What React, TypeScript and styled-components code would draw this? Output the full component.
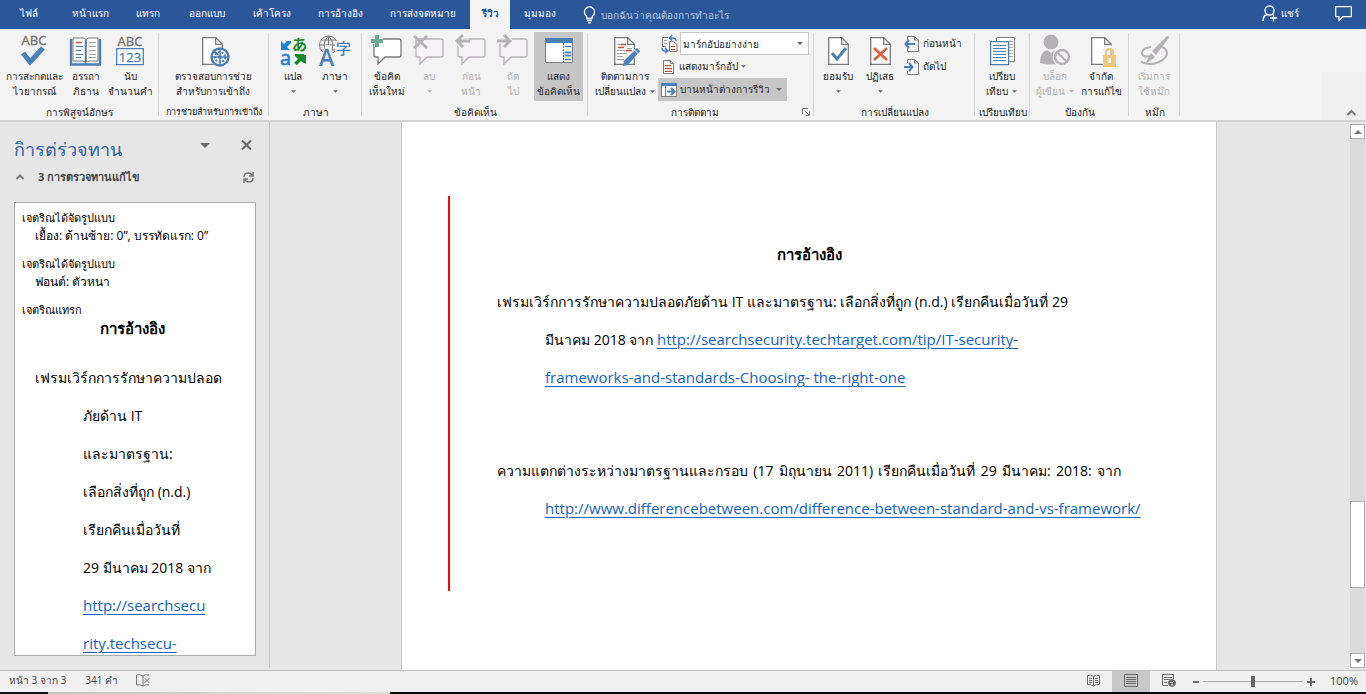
import React from "react";
import styled, { createGlobalStyle, css } from "styled-components";

const BLUE = "#4a7fb8";
const GREY = "#7a7a7a";
const PALE = "#b5b2b5";

const Global = createGlobalStyle`
  * { box-sizing: border-box; }
  body { margin: 0; background: #e6e6e6; color: #262626; font-family: "Open Sans", "Noto Sans", sans-serif; font-size: 10px; }
  button, select, input { font: inherit; color: inherit; margin: 0; padding: 0; border: 0; background: none; }
  svg { display: block; flex: none; overflow: visible; }
`;

const Shell = styled.div`
  display: flex;
  flex-direction: column;
  height: 100vh;
  overflow: hidden;
`;

/* ---------- tab bar ---------- */
const TabBar = styled.header`
  display: flex;
  flex: none;
  height: 29px;
  background: #2b579a;
  color: #fff;
`;
const Tab = styled.button<{ $w: number; $active?: boolean }>`
  flex: 0 0 ${p => p.$w}px;
  height: 29px;
  padding-bottom: 2px;
  white-space: nowrap;
  ${p => p.$active && css`background: #f3f3f3; color: #2b579a; font-weight: 600;`}
`;
const TellMe = styled.label`
  display: flex;
  flex: 1;
  align-items: center;
  gap: 5px;
  padding-left: 14px;
`;
const TellInput = styled.input`
  width: 160px;
  height: 20px;
  outline: 0;
  &::placeholder { color: #b9cae6; opacity: 1; }
`;
const Share = styled.button`
  display: flex;
  align-items: center;
  gap: 3px;
  margin-right: 36px;
  padding-bottom: 3px;
`;
const CommentBtn = styled.button`
  display: flex;
  align-items: center;
  margin-right: 14px;
  padding-bottom: 3px;
`;

/* ---------- ribbon ---------- */
const Ribbon = styled.div`
  display: flex;
  flex: none;
  height: 93px;
  background: #f3f3f3;
  border-bottom: 2px solid #d2d2d2;
`;
const GroupBox = styled.section<{ $w: number }>`
  display: flex;
  flex: 0 0 ${p => p.$w}px;
  flex-direction: column;
  min-width: 0;
  padding-top: 3px;
  background: linear-gradient(#d4d4d4, #d4d4d4) right 4px / 1px 83px no-repeat;
`;
const GroupBody = styled.div<{ $pad?: number }>`
  display: flex;
  height: 72px;
  padding-left: ${p => p.$pad || 0}px;
`;
const GroupFoot = styled.div`
  display: flex;
  align-items: center;
  height: 16px;
`;
const GroupName = styled.h2<{ $small?: boolean }>`
  flex: 1;
  min-width: 0;
  margin: 0;
  font-size: ${p => (p.$small ? 9 : 10)}px;
  font-weight: 400;
  line-height: 16px;
  text-align: center;
  white-space: nowrap;
`;
const Launcher = styled.button`
  margin-right: 4px;
  width: 8px;
`;
const BigButton = styled.button<{ $w: number; $on?: boolean }>`
  display: flex;
  flex: 0 0 ${p => p.$w}px;
  flex-direction: column;
  align-items: center;
  min-width: 0;
  height: 69px;
  padding-top: 1px;
  line-height: 15px;
  white-space: nowrap;
  background: ${p => (p.$on ? "#c6c6c6" : "none")};
  &:disabled { color: #b1b1b1; }
`;
const Line = styled.span`
  display: flex;
  align-items: center;
  justify-content: center;
  gap: 4px;
  height: 15px;
`;
const Stack = styled.div`
  display: flex;
  flex-direction: column;
`;
const ComboRow = styled.label`
  display: flex;
  align-items: center;
  gap: 2px;
  height: 23px;
  padding-left: 3px;
`;
const ComboWrap = styled.span`
  position: relative;
  display: block;
  width: 129px;
  height: 23px;
  border: 1px solid #c6c6c6;
  background: #fff;
`;
const Combo = styled.select`
  width: 100%;
  height: 21px;
  padding-left: 2px;
  appearance: none;
  outline: 0;
`;
const ComboCaret = styled.span`
  position: absolute;
  right: 5px;
  top: 9px;
  pointer-events: none;
`;
const SmallButton = styled.button<{ $on?: boolean; $w?: number }>`
  display: flex;
  align-items: center;
  gap: 3px;
  width: ${p => (p.$w ? p.$w + "px" : "auto")};
  height: 23px;
  padding-left: 3px;
  white-space: nowrap;
  background: ${p => (p.$on ? "#c6c6c6" : "none")};
`;
const Spread = styled.span`
  display: flex;
  flex: 1;
  align-items: center;
  justify-content: space-between;
  padding-right: 5px;
`;
const RibbonEnd = styled.div`
  display: flex;
  flex: 1;
  align-items: flex-end;
  justify-content: flex-end;
`;
const Collapse = styled.button`
  display: flex;
  align-items: flex-end;
  justify-content: flex-end;
  width: 44px;
  height: 48px;
  padding: 0 10px 4px 0;
  background: #f0f0f0;
`;

/* ---------- work area ---------- */
const Work = styled.div`
  display: flex;
  flex: 1;
  min-height: 0;
`;
const Pane = styled.aside`
  display: flex;
  flex: 0 0 270px;
  flex-direction: column;
  margin-bottom: 2px;
  padding: 14px 13px 12px 14px;
  border-right: 1px solid #c3c3c3;
`;
const PaneHead = styled.div`
  display: flex;
  align-items: center;
  height: 26px;
`;
const PaneTitle = styled.h1`
  flex: 1;
  margin: 0;
  color: #2f5fa8;
  font-size: 18px;
  font-weight: 400;
  line-height: 26px;
  white-space: nowrap;
`;
const IconButton = styled.button<{ $gap?: number }>`
  display: flex;
  margin: 0 ${p => p.$gap || 0}px 8px 0;
`;
const Summary = styled.div`
  display: flex;
  align-items: center;
  gap: 14px;
  height: 30px;
  padding: 0 2px;
`;
const Count = styled.strong`
  flex: 1;
  color: #444;
  font-size: 11px;
  white-space: nowrap;
`;
const Card = styled.div`
  flex: 1;
  min-height: 0;
  margin-top: 10px;
  padding: 6px 7px 0;
  overflow: hidden;
  border: 1px solid #ababab;
  background: #fff;
  color: #000;
  white-space: nowrap;
`;
const Kind = styled.div`
  font-size: 11px;
  line-height: 18px;
`;
const Detail = styled.div`
  margin-bottom: 10px;
  padding-left: 13px;
  font-size: 12px;
  line-height: 18px;
`;
const CardHeading = styled.h3`
  margin: 0 0 12px;
  padding-right: 6px;
  font-size: 15px;
  line-height: 18px;
  text-align: center;
`;
const Hanging = styled.p<{ $indent: number; $gap?: number }>`
  margin: ${p => p.$gap || 0}px 0 0;
  padding-left: ${p => p.$indent}px;
  text-indent: -48px;
  font-size: 14px;
  line-height: 38px;
`;
const Link = styled.a`
  color: #1163c1;
  font-size: 15px;
  line-height: 20px;
  text-underline-offset: 3px;
`;

const Canvas = styled.main`
  display: flex;
  flex: 1;
  justify-content: center;
  min-width: 0;
  padding-right: 2px;
`;
const Page = styled.article`
  flex: 0 1 816px;
  min-width: 0;
  padding: 74px 95px 0 46px;
  border: solid #c6c6c6;
  border-width: 0 1px;
  background: #fff;
  color: #000;
  white-space: nowrap;
`;
const Changed = styled.div`
  padding: 39px 0 63px 47px;
  border-left: 2px solid #ff0000;
`;
const Heading = styled.h2`
  margin: 0 0 10px;
  font-size: 15px;
  line-height: 38px;
  text-align: center;
`;
const Justified = styled.span`
  display: block;
  margin-left: -48px;
  text-indent: 0;
  text-align-last: justify;
  white-space: normal;
`;

const ScrollBar = styled.div`
  display: flex;
  flex: 0 0 16px;
  flex-direction: column;
  padding: 2px 1px 2px 0;
`;
const ScrollBtn = styled.button`
  display: flex;
  flex: 0 0 15px;
  align-items: center;
  justify-content: center;
  border: 1px solid #ababab;
  background: #fff;
`;
const Track = styled.div`
  display: flex;
  flex: 1;
  flex-direction: column;
  justify-content: flex-end;
  padding-bottom: 65px;
  background: #dadada;
`;
const Thumb = styled.div`
  height: 87px;
  border: 1px solid #ababab;
  background: #fff;
`;

/* ---------- status bar ---------- */
const Status = styled.footer`
  display: flex;
  flex: none;
  align-items: center;
  height: 22px;
  border-top: 1px solid #c3c3c3;
  background: #f0f0f0;
  color: #444;
`;
const StatusText = styled.span<{ $left: number }>`
  padding: 0 0 2px ${p => p.$left}px;
  font-size: 10px;
  white-space: nowrap;
`;
const Grow = styled.span`
  flex: 1;
  padding: 0 0 3px 18px;
`;
const View = styled.button<{ $on?: boolean }>`
  display: flex;
  align-items: center;
  justify-content: center;
  width: 38px;
  height: 21px;
  padding-bottom: 2px;
  background: ${p => (p.$on ? "#c8c8c8" : "none")};
`;
const Zoom = styled.input`
  width: 100px;
  height: 13px;
  margin: 0 4px;
  appearance: none;
  background: linear-gradient(#ababab, #ababab) center / 100% 1px no-repeat;
  &::-webkit-slider-thumb { appearance: none; width: 4px; height: 11px; background: #666; }
`;
const Percent = styled.span`
  width: 51px;
  padding: 0 8px 2px 0;
  font-size: 11px;
  text-align: right;
`;
const Edge = styled.div`
  flex: none;
  height: 2px;
  background: linear-gradient(90deg, #0c0f14 48px, #c4c4c4 48px, #dcdcdc 390px, #06070d 390px);
`;

/* ---------- icons ---------- */
const Big = ({ children }: { children: React.ReactNode }) => (
  <svg width="40" height="36" viewBox="0 0 40 36" fill="none" aria-hidden="true">{children}</svg>
);
const Caret = ({ c = "#6a6a6a", w = 5 }: { c?: string; w?: number }) => (
  <svg width={w} height={Math.ceil(w / 2)} viewBox="0 0 6 3" fill={c} aria-hidden="true"><path d="M0 0h6L3 3z" /></svg>
);
const Sheet = ({ x = 9 }: { x?: number }) => (
  <g transform={`translate(${x} 4)`} stroke={GREY} strokeWidth="1.3">
    <path d="M.7.7h13l6.6 6.6v20H.7z" fill="#fff" />
    <path d="M13.7.7v6.6h6.6" />
  </g>
);
const Abc = ({ y }: { y: number }) => (
  <text x="20" y={y} fontSize="13" textAnchor="middle" fill="#6f6f6f" stroke="#6f6f6f" strokeWidth=".3" fontFamily="Open Sans, sans-serif">ABC</text>
);
const SpellIcon = () => <Big><Abc y={12} /><path d="M9 20l7 9L29 15" stroke={BLUE} strokeWidth="5" /></Big>;
const BookIcon = () => (
  <Big>
    <path d="M5 6v25.500h29V6" stroke={BLUE} strokeWidth="2.4" />
    <path d="M7 5h10q3 0 3 2v22q-1-1-4-1H7zM32 5H23q-3 0-3 2v22q1-1 4-1h8z" fill="#fff" stroke={GREY} />
    <path d="M19.500 7v25" stroke={BLUE} strokeWidth="1.5" />
    <path d="M10 9.500h6" stroke="#d24726" strokeWidth="1.3" />
    <path d="M10 13.500h7M10 17.500h5M10 21.500h7M10 24.500h5" stroke={BLUE} />
    <path d="M23 9.500h7M23 13.500h7M23 17.500h7M23 21.500h7M23 24.500h7" stroke="#a5a5a5" />
  </Big>
);
const CountIcon = () => (
  <Big>
    <Abc y={13} />
    <path d="M6.700 15.700h26.600v16H6.700z" fill="#fff" stroke={BLUE} strokeWidth="1.300" />
    <text x="20" y="29" fontSize="13" textAnchor="middle" fill={BLUE} stroke={BLUE} strokeWidth=".3" fontFamily="Open Sans, sans-serif">123</text>
  </Big>
);
const AccessIcon = () => (
  <Big>
    <Sheet x={9} />
    <circle cx="27" cy="24" r="8.500" fill="#fff" stroke={BLUE} strokeWidth="2.400" />
    <circle cx="27" cy="24" r="5" stroke={BLUE} strokeWidth="2" strokeDasharray="2 1.500" />
    <path d="M27 16v16M19 24h16" stroke={BLUE} strokeWidth="1.400" />
    <circle cx="27" cy="24" r="2" fill={BLUE} />
    <path d="M20 17l5 5" stroke={BLUE} strokeWidth="2" />
  </Big>
);
const TranslateIcon = () => (
  <Big>
    <path d="M8 8v9h9l-3-3 4-4V8h-4l-3 3z" fill="#1683d8" />
    <text x="7" y="32" fontSize="20" fill="#1683d8" stroke="#1683d8" strokeWidth=".6" fontFamily="Open Sans, sans-serif">a</text>
    <text x="19" y="17" fontSize="15" fontWeight="700" fill="#168a2a" fontFamily="Noto Sans CJK JP, sans-serif">あ</text>
    <path d="M33 31v-9h-2V21h-9v2l3 3-4 4 3 2 4-4z" fill="#168a2a" />
  </Big>
);
const LanguageIcon = () => (
  <Big>
    <circle cx="13.500" cy="12" r="9" stroke={GREY} />
    <path d="M4.500 12h18M13.500 3v18M6 7h15M6 17h15M13.500 3q-9 9 0 18M13.500 3q9 9 0 18" stroke={GREY} />
    <path d="M3 33h19L15 12h-4z" fill="#f3f3f3" />
    <path d="M20 8h16v15H20z" fill="#f3f3f3" />
    <text x="4" y="33" fontSize="23" fontWeight="600" fill={BLUE} fontFamily="Open Sans, sans-serif">A</text>
    <text x="21" y="21" fontSize="15" fontWeight="500" fill={BLUE} fontFamily="Noto Sans CJK JP, sans-serif">字</text>
  </Big>
);
const Bubble = ({ off }: { off?: boolean }) => (
  <path d="M9 6h23q2 0 2 2v14q0 2-2 2H18l-7 7v-7H9q-2 0-2-2V8q0-2 2-2z" fill={off ? "#f7f2f7" : "#fff"} stroke={off ? PALE : GREY} strokeWidth="1.300" />
);
const NewNote = () => <Big><Bubble /><path d="M10 2v12M4 8h12" stroke="#f3f3f3" strokeWidth="6" /><path d="M10 2v12M4 8h12" stroke="#6fa892" strokeWidth="4" /></Big>;
const DelNote = () => <Big><Bubble off /><path d="M5 3l13 12M18 3L5 15" stroke={PALE} strokeWidth="3" /></Big>;
const PrevNote = () => <Big><Bubble off /><path d="M18 8H6M12 2L6 8l6 6" stroke="#f3f3f3" strokeWidth="5" /><path d="M19 8H6M12 2L6 8l6 6" stroke={PALE} strokeWidth="3" /></Big>;
const NextNote = () => <Big><Bubble off /><path d="M5 8h12M11 2l6 6-6 6" stroke="#f3f3f3" strokeWidth="5" /><path d="M4 8h13M11 2l6 6-6 6" stroke={PALE} strokeWidth="3" /></Big>;
const ShowIcon = () => (
  <Big>
    <path d="M6.500 5.500h27v24h-27z" fill="#fff" stroke={GREY} />
    <path d="M6 5h28v5H6z" fill={BLUE} />
    <path d="M24.500 10v20" stroke="#777" strokeDasharray="2 1" />
    <path d="M25 18h8v6h-8z" fill="#c3daf2" />
    <path d="M26 13.500h6M26 19.500h6M26 22.500h6M26 26.500h6" stroke={BLUE} strokeWidth="1.400" />
  </Big>
);
const TrackIcon = () => (
  <Big>
    <Sheet x={9} />
    <path d="M12 11.500h7M22 15.500h5M12 23.500h6" stroke="#a5a5a5" />
    <path d="M12 20.500h10M12 26.500h9M12 17.500h10" stroke="#a5a5a5" />
    <path d="M16 11.500h5M13 14.500h6M21 17.500h6" stroke="#d24726" strokeWidth="1.300" />
    <path d="M34 16L19 31" stroke="#f3f3f3" strokeWidth="6" />
    <path d="M35 18l-3-3-13 13-1 5 5-1z" fill={BLUE} />
    <path d="M29.500 17l3.500 3.500" stroke="#fff" />
  </Big>
);
const AcceptIcon = () => <Big><Sheet x={10} /><path d="M14 20l5 6 9-11" stroke={BLUE} strokeWidth="3" /></Big>;
const RejectIcon = () => <Big><Sheet x={10} /><path d="M14 15l13 12M27 15L14 27" stroke="#d8603f" strokeWidth="2.600" /></Big>;
const CompareIcon = () => (
  <Big>
    <path d="M14.500 4.500h18v24h-18z" fill="#fff" stroke={GREY} />
    <path d="M27 8.500h4M27 11.500h4M27 14.500h4M27 17.500h4M27 20.500h4M27 23.500h4" stroke="#a5a5a5" />
    <path d="M8.600 8.600h18v23h-18z" fill="#fff" stroke={BLUE} strokeWidth="1.300" />
    <path d="M11 12.500h13M11 15.500h13M11 18.500h13M11 21.500h13M11 24.500h13M11 27.500h13" stroke={BLUE} />
  </Big>
);
const BlockIcon = () => (
  <Big>
    <circle cx="16" cy="9" r="7.500" fill={PALE} />
    <path d="M5 30q0-11 7-13l4 3 4-3q7 2 7 13-11 3-22 0z" fill={PALE} />
    <circle cx="27" cy="24" r="9.500" fill="#f3f3f3" />
    <circle cx="27" cy="24" r="7" stroke={PALE} strokeWidth="2.400" />
    <path d="M22 19l10 10" stroke={PALE} strokeWidth="2.400" />
  </Big>
);
const LockIcon = () => (
  <Big>
    <Sheet x={10} />
    <path d="M23 23v-3.500a5 5 0 0110 0V23" stroke="#f3f3f3" strokeWidth="5" />
    <path d="M25 24v-4.500a3.500 3.500 0 017 0V24" stroke="#edc77c" strokeWidth="2.400" />
    <path d="M22 22h13v12H22z" fill="#edc77c" />
    <path d="M27.500 25h2.500v5h-2.500z" fill="#fff" />
  </Big>
);
const InkIcon = () => (
  <Big>
    <path d="M17 14Q8 15 8 20t11 3M7 29q10 4 18 0t8-9q-1-5-5-6" stroke={PALE} strokeWidth="2" />
    <path d="M33 3q3 0 1 3L22 22l-4-4L31 5zM17 20l4 4-5 4-4 2 2-5z" fill={PALE} />
  </Big>
);
const Doc16 = ({ children }: { children?: React.ReactNode }) => (
  <svg width="16" height="18" viewBox="0 0 16 18" fill="none" aria-hidden="true">
    <path d="M3.500 5V1.500h7L14.500 5v11.500h-11V13M10.500 1.500V5h4" stroke={GREY} />
    {children}
  </svg>
);
const MarkupIcon = () => (
  <svg width="17" height="18" viewBox="0 0 17 18" fill="none" aria-hidden="true">
    <path d="M7 2.500H1.500v9H5M8.500 6.500h4l3.500 3v7H8.500z" stroke={GREY} />
    <path d="M3 5.500h3M3 8.500h3" stroke="#999" />
    <path d="M10 11.500h4M10 14.500h4" stroke="#d24726" />
    <path d="M9 3h3q3 0 3 3M11 0L8.500 3 11 5.500M1 13q0 3 3 3h2M4 13l3 3-3 2" stroke={BLUE} strokeWidth="1.500" />
  </svg>
);
const ShowMarkup = () => (
  <svg width="15" height="16" viewBox="0 0 15 16" fill="none" aria-hidden="true">
    <path d="M2.500 1.500h7l3 3v10h-10zM9.500 1.500v3h3" fill="#fff" stroke={GREY} />
    <path d="M4 6.500h6M4 9.500h7M4 12.500h7" stroke="#d24726" />
    <path d="M4 8h7M4 11h7" stroke="#aaa" strokeWidth=".6" />
  </svg>
);
const PaneIcon = () => (
  <svg width="16" height="16" viewBox="0 0 16 16" fill="none" aria-hidden="true">
    <path d="M.5 1.500h15v13H.5z" fill="#fff" stroke={GREY} />
    <path d="M0 1h16v3H0z" fill={BLUE} />
    <path d="M4.500 4v10" stroke={GREY} />
    <path d="M6 9.500h7M10 6l3.500 3.500L10 13" stroke={BLUE} strokeWidth="2" />
  </svg>
);

type Item = { w: number; icon: React.ReactNode; a: string; b?: string; caret?: boolean; off?: boolean; on?: boolean };
const Buttons = ({ items }: { items: Item[] }) => (
  <>
    {items.map(i => (
      <BigButton key={i.a + i.w + (i.b || "")} $w={i.w} $on={i.on} disabled={i.off} type="button">
        {i.icon}
        <Line>{i.a}</Line>
        <Line>{i.b}{i.caret && <Caret c={i.off ? "#b5b5b5" : undefined} />}</Line>
      </BigButton>
    ))}
  </>
);
type GroupProps = { w: number; name: string; pad?: number; launch?: boolean; small?: boolean; children: React.ReactNode };
const Group = ({ w, name, pad, launch, small, children }: GroupProps) => (
  <GroupBox $w={w}>
    <GroupBody $pad={pad}>{children}</GroupBody>
    <GroupFoot>
      <GroupName $small={small}>{name}</GroupName>
      {launch && (
        <Launcher type="button" aria-label={name}>
          <svg width="8" height="8" viewBox="0 0 8 8" fill="none" stroke="#777"><path d="M.5 6V.5H6M3 3l4 4M7.500 3.500v4h-4" /></svg>
        </Launcher>
      )}
    </GroupFoot>
  </GroupBox>
);

const tabs: [string, number][] = [
  ["ไฟล์", 58], ["หน้าแรก", 64], ["แทรก", 52], ["ออกแบบ", 66], ["เค้าโครง", 64],
  ["การอ้างอิง", 72], ["การส่งจดหมาย", 94], ["รีวิว", 40], ["มุมมอง", 59],
];

export default function App() {
  return (
    <Shell>
      <Global />
      <TabBar>
        {tabs.map(([t, w]) => <Tab key={t} $w={w} $active={t === "รีวิว"} type="button">{t}</Tab>)}
        <TellMe>
          <svg width="13" height="18" viewBox="0 0 13 18" fill="none" stroke="#fff" strokeWidth="1.300" aria-hidden="true">
            <path d="M4 12.500Q4 10 2.500 9a5 5 0 118 0Q9 10 9 12.500zM4 14.500h5M5 16.800h3" />
          </svg>
          <TellInput aria-label="บอกฉันว่าคุณต้องการทำอะไร" placeholder="บอกฉันว่าคุณต้องการทำอะไร" />
        </TellMe>
        <Share type="button">
          <svg width="16" height="17" viewBox="0 0 16 17" fill="none" stroke="#fff" strokeWidth="1.400" aria-hidden="true">
            <circle cx="7.500" cy="5.500" r="4.500" /><path d="M1 16q0-5 4-6.500M10 9l2 1.500M11.500 9.500v7M8 13h7" />
          </svg>
          แชร์
        </Share>
        <CommentBtn type="button" aria-label="ข้อคิดเห็น">
          <svg width="17" height="15" viewBox="0 0 17 15" fill="none" stroke="#fff" strokeWidth="1.200" aria-hidden="true"><path d="M.7.7h15.600v10H8l-4 3.600v-3.600H.7z" /></svg>
        </CommentBtn>
      </TabBar>

      <Ribbon>
        <Group w={159} name="การพิสูจน์อักษร">
          <Buttons items={[
            { w: 68, icon: <SpellIcon />, a: "การสะกดและ", b: "ไวยากรณ์" },
            { w: 36, icon: <BookIcon />, a: "อรรถา", b: "ภิธาน" },
            { w: 52, icon: <CountIcon />, a: "นับ", b: "จำนวนคำ" },
          ]} />
        </Group>
        <Group w={110} name="การช่วยสำหรับการเข้าถึง" small>
          <Buttons items={[{ w: 108, icon: <AccessIcon />, a: "ตรวจสอบการช่วย", b: "สำหรับการเข้าถึง" }]} />
        </Group>
        <Group w={93} pad={3} name="ภาษา">
          <Buttons items={[
            { w: 42, icon: <TranslateIcon />, a: "แปล", caret: true },
            { w: 42, icon: <LanguageIcon />, a: "ภาษา", caret: true },
          ]} />
        </Group>
        <Group w={226} pad={4} name="ข้อคิดเห็น">
          <Buttons items={[
            { w: 42, icon: <NewNote />, a: "ข้อคิด", b: "เห็นใหม่" },
            { w: 42, icon: <DelNote />, a: "ลบ", caret: true, off: true },
            { w: 42, icon: <PrevNote />, a: "ก่อน", b: "หน้า", off: true },
            { w: 42, icon: <NextNote />, a: "ถัด", b: "ไป", off: true },
            { w: 49, icon: <ShowIcon />, a: "แสดง", b: "ข้อคิดเห็น", on: true },
          ]} />
        </Group>
        <Group w={226} pad={4} name="การติดตาม" launch>
          <Buttons items={[{ w: 66, icon: <TrackIcon />, a: "ติดตามการ", b: "เปลี่ยนแปลง", caret: true }]} />
          <Stack>
            <ComboRow>
              <MarkupIcon />
              <ComboWrap>
                <Combo aria-label="มาร์กอัป"><option>มาร์กอัปอย่างง่าย</option></Combo>
                <ComboCaret><Caret w={6} /></ComboCaret>
              </ComboWrap>
            </ComboRow>
            <SmallButton type="button"><ShowMarkup />แสดงมาร์กอัป<Caret /></SmallButton>
            <SmallButton type="button" $on $w={129}><PaneIcon /><Spread>บานหน้าต่างการรีวิว<Caret w={6} /></Spread></SmallButton>
          </Stack>
        </Group>
        <Group w={161} pad={3} name="การเปลี่ยนแปลง">
          <Buttons items={[
            { w: 42, icon: <AcceptIcon />, a: "ยอมรับ", caret: true },
            { w: 42, icon: <RejectIcon />, a: "ปฏิเสธ", caret: true },
          ]} />
          <Stack>
            <SmallButton type="button"><Doc16><path d="M11 9H2M5 5L1.500 9 5 13" stroke={BLUE} strokeWidth="2" /></Doc16>ก่อนหน้า</SmallButton>
            <SmallButton type="button"><Doc16><path d="M0 9h8M5 5l3.500 4L5 13" stroke={BLUE} strokeWidth="2" /></Doc16>ถัดไป</SmallButton>
          </Stack>
        </Group>
        <Group w={55} name="เปรียบเทียบ">
          <Buttons items={[{ w: 53, icon: <CompareIcon />, a: "เปรียบ", b: "เทียบ", caret: true }]} />
        </Group>
        <Group w={99} name="ป้องกัน">
          <Buttons items={[
            { w: 50, icon: <BlockIcon />, a: "บล็อก", b: "ผู้เขียน", caret: true, off: true },
            { w: 42, icon: <LockIcon />, a: "จำกัด", b: "การแก้ไข" },
          ]} />
        </Group>
        <Group w={51} name="หมึก">
          <Buttons items={[{ w: 50, icon: <InkIcon />, a: "เริ่มการ", b: "ใช้หมึก", off: true }]} />
        </Group>
        <RibbonEnd>
          <Collapse type="button" aria-label="ยุบ Ribbon">
            <svg width="9" height="6" viewBox="0 0 9 6" fill="none" stroke="#777" strokeWidth="2"><path d="M.5 5l4-4 4 4" /></svg>
          </Collapse>
        </RibbonEnd>
      </Ribbon>

      <Work>
        <Pane>
          <PaneHead>
            <PaneTitle>กิารต่ร่วจทาน</PaneTitle>
            <IconButton type="button" aria-label="ตัวเลือก" $gap={31}><Caret w={10} /></IconButton>
            <IconButton type="button" aria-label="ปิด" $gap={4}>
              <svg width="11" height="10" viewBox="0 0 11 10" stroke="#6a6a6a" strokeWidth="2"><path d="M1 .5l9 9M10 .5l-9 9" /></svg>
            </IconButton>
          </PaneHead>
          <Summary>
            <svg width="8" height="6" viewBox="0 0 8 6" fill="none" stroke="#777" strokeWidth="2"><path d="M.5 5L4 1.500 7.500 5" /></svg>
            <Count>3 การตรวจทานแก้ไข</Count>
            <svg width="11" height="11" viewBox="0 0 11 11" fill="none" stroke="#777" strokeWidth="1.500">
              <path d="M1 5q0-4 4.500-4Q8 1 9.500 4M10 0v4H6M10 6q0 4-4.500 4Q3 10 1.500 7M1 11V7h4" />
            </svg>
          </Summary>
          <Card>
            <Kind>เจตริณได้จัดรูปแบบ</Kind>
            <Detail>เยื้อง: ด้านซ้าย: 0”, บรรทัดแรก: 0”</Detail>
            <Kind>เจตริณได้จัดรูปแบบ</Kind>
            <Detail>ฟอนต์: ตัวหนา</Detail>
            <Kind>เจตริณแทรก</Kind>
            <CardHeading>การอ้างอิง</CardHeading>
            <Hanging $indent={61} $gap={22}>
              เฟรมเวิร์กการรักษาความปลอด<br />ภัยด้าน IT<br />และมาตรฐาน:<br />เลือกสิ่งที่ถูก (n.d.)<br />เรียกคืนเมื่อวันที่<br />29 มีนาคม 2018 จาก<br />
              <Link href="#source">http://searchsecu<br />rity.techsecu-</Link>
            </Hanging>
          </Card>
        </Pane>

        <Canvas>
          <Page>
            <Changed>
              <Heading>การอ้างอิง</Heading>
              <Hanging $indent={48}>
                เฟรมเวิร์กการรักษาความปลอดภัยด้าน IT และมาตรฐาน: เลือกสิ่งที่ถูก (n.d.) เรียกคืนเมื่อวันที่ 29<br />
                มีนาคม 2018 จาก <Link href="#source">http://searchsecurity.techtarget.com/tip/IT-security-<br />frameworks-and-standards-Choosing- the-right-one</Link>
              </Hanging>
              <Hanging $indent={48} $gap={55}>
                <Justified>ความแตกต่างระหว่างมาตรฐานและกรอบ (17 มิถุนายน 2011) เรียกคืนเมื่อวันที่ 29 มีนาคม: 2018: จาก</Justified>
                <Link href="#difference">http://www.differencebetween.com/difference-between-standard-and-vs-framework/</Link>
              </Hanging>
            </Changed>
          </Page>
        </Canvas>

        <ScrollBar>
          <ScrollBtn type="button" aria-label="เลื่อนขึ้น"><svg width="8" height="4" viewBox="0 0 8 4" fill="#777"><path d="M4 0l4 4H0z" /></svg></ScrollBtn>
          <Track><Thumb /></Track>
          <ScrollBtn type="button" aria-label="เลื่อนลง"><svg width="8" height="4" viewBox="0 0 8 4" fill="#777"><path d="M0 0h8L4 4z" /></svg></ScrollBtn>
        </ScrollBar>
      </Work>

      <Status>
        <StatusText $left={9}>หน้า 3 จาก 3</StatusText>
        <StatusText $left={19}>341 คำ</StatusText>
        <Grow>
          <svg width="15" height="13" viewBox="0 0 15 13" fill="none" stroke="#777">
            <path d="M7 2Q4 0 .5 1v10Q4 10 7 12V2q2-2 6-1M7 12q3-2 6-1M8.500 4l5 5M13.500 4l-5 5" />
          </svg>
        </Grow>
        <View type="button" aria-label="โหมดการอ่าน">
          <svg width="13" height="13" viewBox="0 0 13 13" fill="none" stroke="#6a6a6a"><path d="M6.500 2.500Q4 .5.500 1.500v9q3-.5 6 1.500 3-2 6-1.500v-9q-3.500-1-6 1V12M2 4.500h3M2 6.500h3M2 8.500h3M8 4.500h3M8 6.500h3M8 8.500h3" /></svg>
        </View>
        <View type="button" aria-label="เค้าโครงเหมือนพิมพ์" $on>
          <svg width="14" height="13" viewBox="0 0 14 13" fill="none" stroke="#6a6a6a"><path d="M.5.500h13v12H.5zM2 3.500h10M2 5.500h10M2 7.500h10M2 9.500h10" /></svg>
        </View>
        <View type="button" aria-label="เค้าโครงเว็บ">
          <svg width="14" height="13" viewBox="0 0 14 13" fill="none" stroke="#6a6a6a"><path d="M6 11.500H.5V.500h11V5M2 3.500h8M2 5.500h6M2 8.500h3" /><circle cx="10" cy="9" r="3.500" fill="#6a6a6a" /><path d="M8 8l2 1 2-2M10 12v-2" stroke="#eee" /></svg>
        </View>
        <svg width="11" height="9" viewBox="0 0 11 9" fill="#6a6a6a"><path d="M5 4h6v2H5z" /></svg>
        <Zoom type="range" aria-label="ย่อ/ขยาย" defaultValue={50} />
        <svg width="8" height="9" viewBox="0 0 8 9" fill="#6a6a6a"><path d="M0 4h3V1h2v3h3v2H5v3H3V6H0z" /></svg>
        <Percent>100%</Percent>
      </Status>
      <Edge />
    </Shell>
  );
}
